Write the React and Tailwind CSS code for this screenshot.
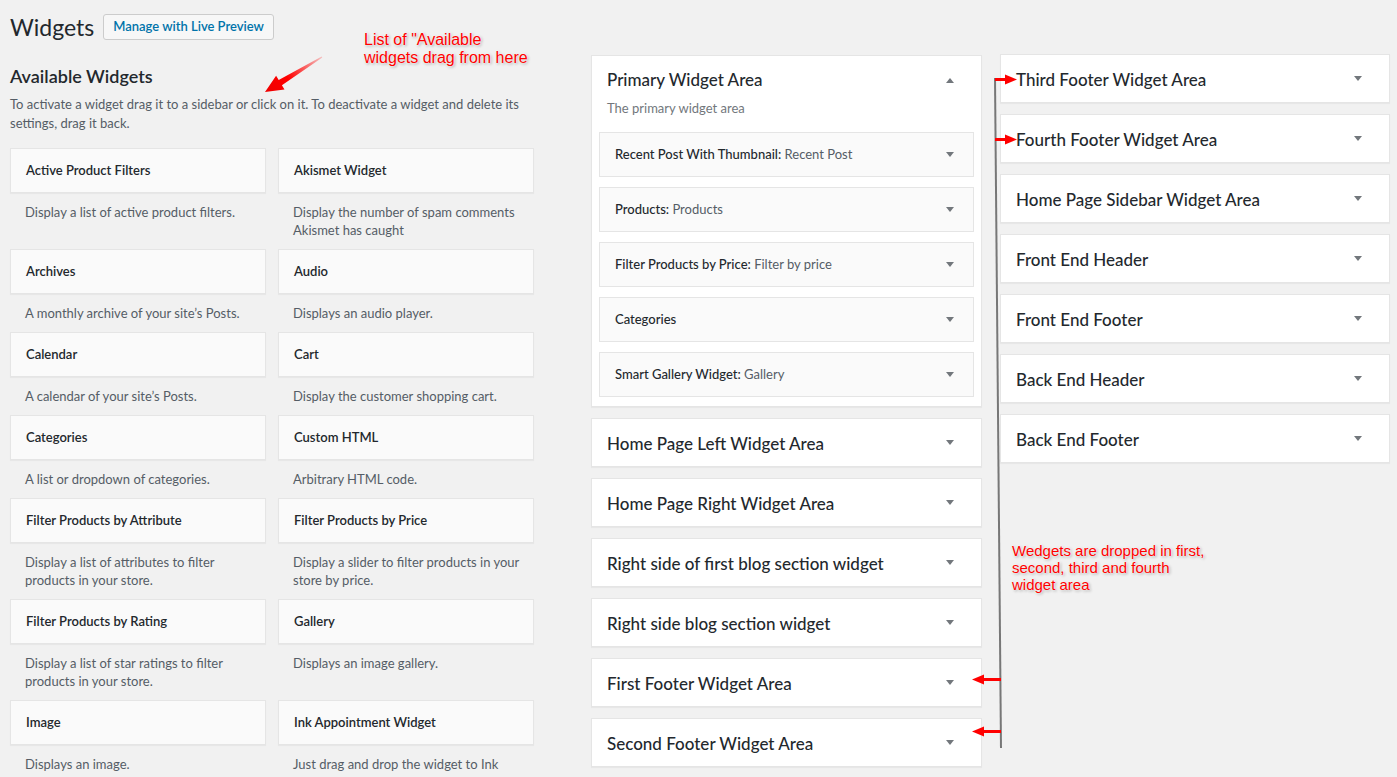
import React from "react";

const availableWidgets = [
  ["Active Product Filters", "Display a list of active product filters."],
  ["Akismet Widget", "Display the number of spam comments Akismet has caught"],
  ["Archives", "A monthly archive of your site’s Posts."],
  ["Audio", "Displays an audio player."],
  ["Calendar", "A calendar of your site’s Posts."],
  ["Cart", "Display the customer shopping cart."],
  ["Categories", "A list or dropdown of categories."],
  ["Custom HTML", "Arbitrary HTML code."],
  ["Filter Products by Attribute", "Display a list of attributes to filter products in your store."],
  ["Filter Products by Price", "Display a slider to filter products in your store by price."],
  ["Filter Products by Rating", "Display a list of star ratings to filter products in your store."],
  ["Gallery", "Displays an image gallery."],
  ["Image", "Displays an image."],
  ["Ink Appointment Widget", "Just drag and drop the widget to Ink Appointment"],
];

const primaryWidgets = [
  ["Recent Post With Thumbnail:", "Recent Post"],
  ["Products:", "Products"],
  ["Filter Products by Price:", "Filter by price"],
  ["Categories", ""],
  ["Smart Gallery Widget:", "Gallery"],
];

const middleAreas = [
  "Home Page Left Widget Area",
  "Home Page Right Widget Area",
  "Right side of first blog section widget",
  "Right side blog section widget",
  "First Footer Widget Area",
  "Second Footer Widget Area",
];

const rightAreas = [
  "Third Footer Widget Area",
  "Fourth Footer Widget Area",
  "Home Page Sidebar Widget Area",
  "Front End Header",
  "Front End Footer",
  "Back End Header",
  "Back End Footer",
];

const Caret = ({ up }) => (
  <svg width="8" height="5" viewBox="0 0 8 5" className="shrink-0">
    {up ? <path d="M0 5 L4 0 L8 5 Z" fill="#72777c" /> : <path d="M0 0 L8 0 L4 5 Z" fill="#72777c" />}
  </svg>
);

const SidebarBox = ({ title }) => (
  <div className="h-[49px] bg-white border border-[#e5e5e5] shadow-[0_1px_1px_rgba(0,0,0,0.04)] flex items-center justify-between pl-[15px] pr-[27px]">
    <span className="pt-[3px] text-[17px] font-medium text-[#23282d]">{title}</span>
    <Caret />
  </div>
);

const glow = "[text-shadow:0_0_2px_#fff,0_0_3px_#fff,1px_1px_3px_#888]";

export default function App() {
  return (
    <div className="relative h-[777px] overflow-hidden bg-[#f1f1f1] pt-[14px] pl-[10px] font-['Lato','Open_Sans',sans-serif] text-[#23282d]">
      <div className="flex items-center gap-[9px] h-[26px]">
        <h1 className="text-[23px] font-normal leading-none">Widgets</h1>
        <button className="h-[26px] px-[9px] border border-[#cccccc] bg-[#f7f7f7] rounded-[3px] text-[13px] font-semibold text-[#0073aa]">
          Manage with Live Preview
        </button>
      </div>

      <div className="flex mt-[15px]">
        <div className="w-[525px]">
          <h2 className="mt-[10px] text-[18px] leading-[22px] font-semibold">Available Widgets</h2>
          <p className="mt-[8px] text-[13px] leading-[19px] text-[#555d66]">
            To activate a widget drag it to a sidebar or click on it. To deactivate a widget and delete its
            settings, drag it back.
          </p>
          <div className="grid grid-cols-2 gap-x-[12px] mt-[15px] w-[524px]">
            {availableWidgets.map(([title, desc], i) => (
              <div key={i} className="flex flex-col">
                <div className="h-[45px] bg-[#fafafa] border border-[#e5e5e5] shadow-[0_1px_1px_rgba(0,0,0,0.04)] flex items-center px-[15px] text-[13px] font-semibold">
                  {title}
                </div>
                <div className="pt-[10px] pb-[10px] px-[15px] text-[13px] leading-[18px] text-[#555d66]">{desc}</div>
              </div>
            ))}
          </div>
        </div>

        <div className="w-[391px] ml-[56px] flex flex-col gap-[11px]">
          <div className="bg-white border border-[#e5e5e5] shadow-[0_1px_1px_rgba(0,0,0,0.04)] pb-[9px]">
            <div className="flex items-center justify-between pl-[15px] pr-[27px] pt-[13px]">
              <span className="text-[17px] leading-[22px] font-medium">Primary Widget Area</span>
              <Caret up />
            </div>
            <p className="mt-[8px] px-[15px] text-[13px] leading-[18px] text-[#72777c]">The primary widget area</p>
            <div className="mt-[15px] px-[7px] flex flex-col gap-[10px]">
              {primaryWidgets.map(([a, b], i) => (
                <div key={i} className="h-[45px] bg-[#fafafa] border border-[#e5e5e5] flex items-center justify-between pl-[15px] pr-[19px] text-[13px]">
                  <span>
                    <span className="font-medium">{a}</span>
                    {b && <span className="text-[#555d66]"> {b}</span>}
                  </span>
                  <Caret />
                </div>
              ))}
            </div>
          </div>
          {middleAreas.map((t) => (
            <SidebarBox key={t} title={t} />
          ))}
        </div>

        <div className="w-[390px] ml-[18px] -mt-px flex flex-col gap-[11px]">
          {rightAreas.map((t) => (
            <SidebarBox key={t} title={t} />
          ))}
        </div>
      </div>

      <div className={`absolute left-[364px] top-[31px] font-['Liberation_Sans',Arial,sans-serif] text-[16px] leading-[18px] text-[#ff0000] ${glow}`}>
        List of "Available
        <br />
        widgets drag from here
      </div>
      <div className={`absolute left-[1012px] top-[542px] font-['Liberation_Sans',Arial,sans-serif] text-[15px] leading-[17px] text-[#ff0000] ${glow}`}>
        Wedgets are dropped in first,
        <br />
        second, third and fourth
        <br />
        widget area
      </div>

      <svg className="absolute inset-0 pointer-events-none" width="1397" height="777">
        <defs>
          <linearGradient id="ag" x1="322" y1="57" x2="265" y2="92" gradientUnits="userSpaceOnUse">
            <stop offset="0" stopColor="#ff0000" stopOpacity="0.2" />
            <stop offset="0.6" stopColor="#ff0000" />
            <stop offset="1" stopColor="#ee0000" />
          </linearGradient>
        </defs>
        <polygon
          points="322.3,57.4 281.9,85.2 284.5,89.4 265,92 276.1,75.8 278.7,80 321.7,56.6"
          fill="url(#ag)"
        />
        <line x1="995" y1="78" x2="1001" y2="748" stroke="#777" strokeWidth="2" />
        <g fill="#ff0000">
          <rect x="995" y="78" width="12" height="3" />
          <polygon points="1005,74.5 1017,79.5 1005,84.5" />
          <rect x="995" y="138" width="12" height="3" />
          <polygon points="1005,134.5 1017,139.5 1005,144.5" />
          <rect x="982" y="678" width="19" height="3" />
          <polygon points="984,674.5 972,679.5 984,684.5" />
          <rect x="982" y="730" width="19" height="3" />
          <polygon points="984,726.5 972,731.5 984,736.5" />
        </g>
      </svg>
    </div>
  );
}
